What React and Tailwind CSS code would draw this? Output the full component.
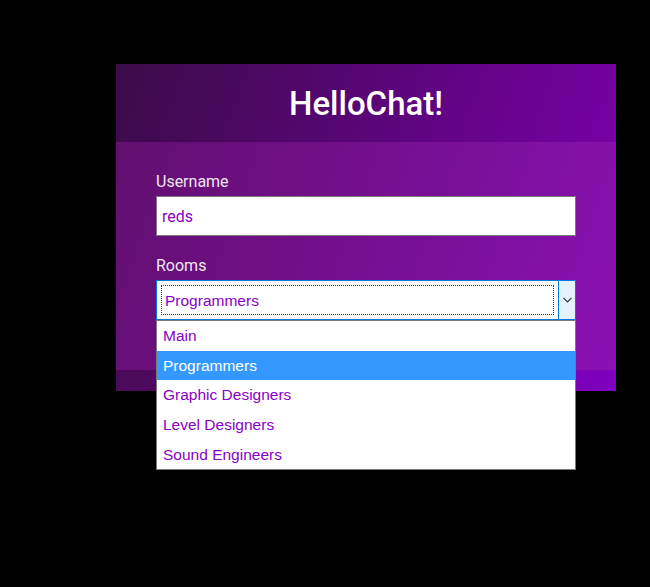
import { useState } from 'react'

const rooms = ['Main', 'Programmers', 'Graphic Designers', 'Level Designers', 'Sound Engineers']

export default function App() {
  const [room, setRoom] = useState('Programmers')

  return (
    <div className="min-h-[587px] w-[650px] bg-black pt-[64px] pl-[116px]">
      <div className="relative w-[500px] bg-[linear-gradient(110deg,#600f6c,#8a10b4)] font-['Roboto',sans-serif]">
        {/* Header */}
        <div className="h-[78px] flex items-center justify-center bg-[linear-gradient(110deg,#3b0b48,#7600a4)]">
          <h1 className="text-[33px] font-medium text-white leading-none">HelloChat!</h1>
        </div>

        {/* Form */}
        <div className="px-[40px] pt-[28px] pb-[50px]">
          <label className="block text-[16px] leading-[24px] text-[#efe6f1] mb-[2px]">Username</label>
          <div className="h-[40px] bg-white border border-[#7a7a7a] flex items-center px-[5px] mb-[18px]">
            <span className="text-[16px] text-[#8b00c6] pt-[1px]">reds</span>
          </div>

          <label className="block text-[16px] leading-[24px] text-[#efe6f1] mb-[2px]">Rooms</label>
          <div className="relative">
            <div className="h-[40px] bg-white border border-[#0078d7] flex">
              <div className="flex-1 p-[4px]">
                <div className="h-full border border-dotted border-[#6a1a8a] flex items-center pl-[3px] pt-[1px] font-['Liberation_Sans',sans-serif] text-[15.5px] text-[#8b00c6]">
                  {room}
                </div>
              </div>
              <div className="w-[17px] bg-[#e5f1fb] border-l border-[#0078d7] flex items-center justify-center">
                <svg width="9" height="6" viewBox="0 0 9 6" fill="none" stroke="#333" strokeWidth="1.2">
                  <path d="M0.5 0.8 L4.5 4.8 L8.5 0.8" />
                </svg>
              </div>
            </div>

            {/* Open dropdown list */}
            <ul className="absolute left-0 right-0 top-[40px] z-10 bg-white border border-[#7a7a7a] font-['Liberation_Sans',sans-serif] text-[15.5px]">
              {rooms.map(r => (
                <li
                  key={r}
                  onClick={() => setRoom(r)}
                  className={`h-[29.6px] flex items-center pl-[6px] ${r === room ? 'bg-[#3399ff] text-white' : 'text-[#8b00c6]'}`}
                >
                  {r}
                </li>
              ))}
            </ul>
          </div>
        </div>

        {/* Footer band */}
        <div className="h-[21px] bg-[linear-gradient(110deg,#4a0a58,#8000c0)]" />
      </div>
    </div>
  )
}
